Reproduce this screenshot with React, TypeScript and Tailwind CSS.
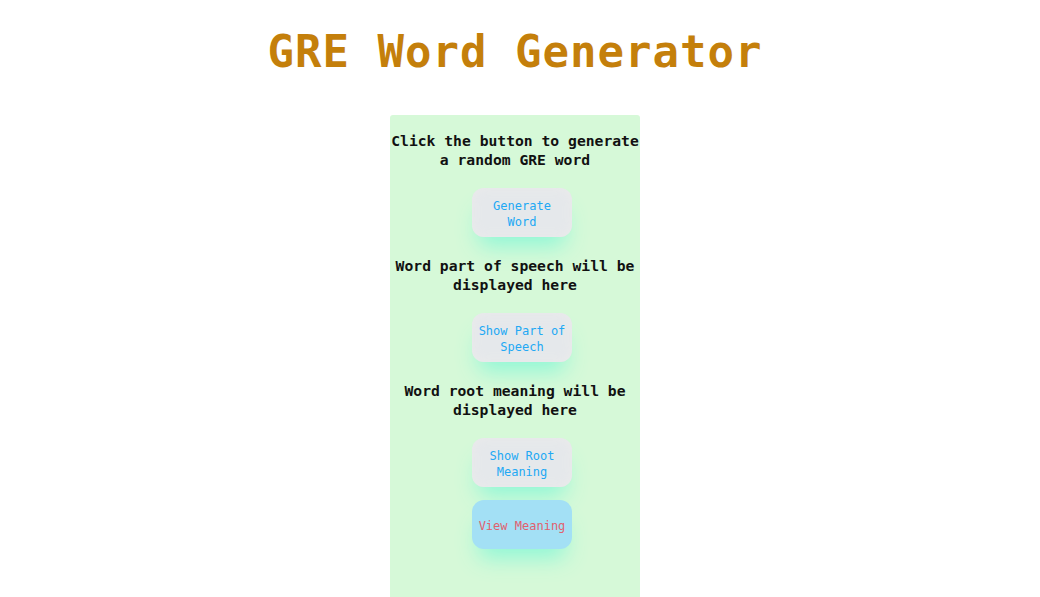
import React from "react";

const mono = { fontFamily: '"DejaVu Sans Mono", "Liberation Mono", monospace' };

function Btn({ children, view = false }: { children: React.ReactNode; view?: boolean }) {
  return (
    <button
      className={
        view
          ? "ml-[14px] flex h-[49px] w-[100px] items-center justify-center rounded-[12px] bg-[#a3e0f5] px-[6px] pt-[2px] text-[12px] leading-[16px] text-[#e0606e] shadow-[0_16px_22px_-7px_#8ff7d6]"
          : "ml-[14px] flex h-[49px] w-[100px] items-center justify-center rounded-[12px] bg-[#e5e8eb] px-[6px] pt-[2px] text-[12px] leading-[16px] text-[#22a8f4] shadow-[inset_0_0_12px_#ebebeb,0_16px_22px_-7px_#8ff7d6]"
      }
      style={mono}
    >
      {children}
    </button>
  );
}

function Heading({ children, className = "" }: { children: React.ReactNode; className?: string }) {
  return (
    <h3 className={"text-center text-[14.7px] font-bold leading-[19px] text-[#111] " + className} style={mono}>
      {children}
    </h3>
  );
}

export default function App() {
  return (
    <div className="flex min-h-[597px] flex-col items-center bg-white pr-[10px]" style={mono}>
      <h1 className="mt-[24px] text-[44px] font-bold leading-[56px] tracking-[1px] text-[#c47f0b]">
        GRE Word Generator
      </h1>
      <div className="mt-[35px] flex w-[250px] flex-col items-center rounded-t-[3px] bg-[#d6f9d8] pb-[60px] pt-[16px]">
        <Heading>Click the button to generate a random GRE word</Heading>
        <div className="mt-[19px]">
          <Btn>Generate Word</Btn>
        </div>
        <Heading className="mt-[19px]">Word part of speech will be displayed here</Heading>
        <div className="mt-[19px]">
          <Btn>Show Part of Speech</Btn>
        </div>
        <Heading className="mt-[19px]">Word root meaning will be displayed here</Heading>
        <div className="mt-[19px]">
          <Btn>Show Root Meaning</Btn>
        </div>
        <div className="mt-[13px]">
          <Btn view>View Meaning</Btn>
        </div>
      </div>
    </div>
  );
}
